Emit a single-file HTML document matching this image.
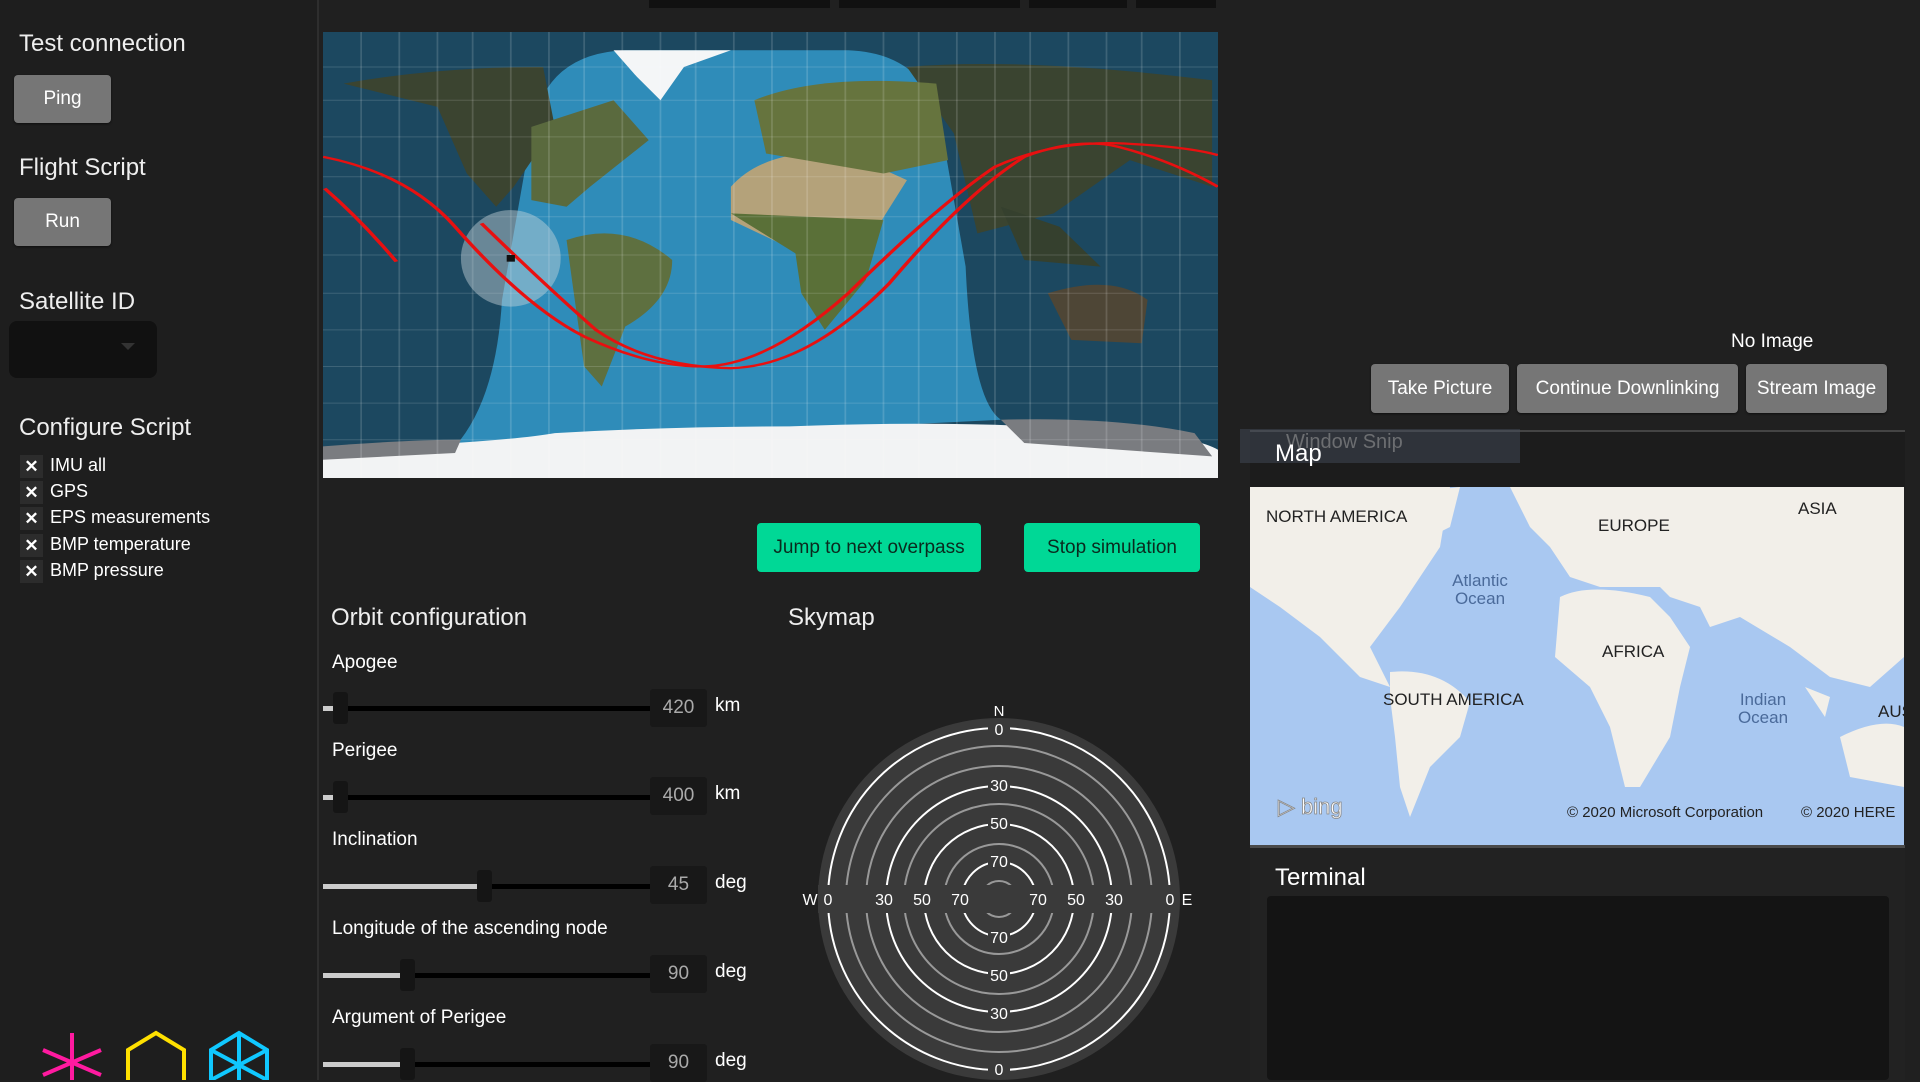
<!DOCTYPE html>
<html><head><meta charset="utf-8"><style>
*{margin:0;padding:0;box-sizing:border-box}
body{width:1920px;height:1080px;background:#202020;font-family:"Segoe UI","Liberation Sans",sans-serif;color:#fff;position:relative;overflow:hidden}
.a{position:absolute}
.h{font-size:24px;color:#eee;white-space:nowrap}
.btn{position:absolute;background:#767676;color:#fff;border-radius:4px;font-size:19px;display:flex;align-items:center;justify-content:center;box-shadow:0 1px 2px #0008}
.gbtn{position:absolute;background:#00d896;color:#0a2a1e;border-radius:4px;font-size:19px;display:flex;align-items:center;justify-content:center}
.cb{position:absolute;left:20px;width:23px;height:23px;background:#2c2c2c;color:#fff;font-size:17px;font-weight:bold;text-align:center;line-height:23px}
.cl{position:absolute;left:50px;font-size:18px;color:#fff}
.lbl{position:absolute;left:332px;font-size:19px;color:#fff}
.trk{position:absolute;left:323px;width:327px;height:5px;background:#000}
.fill{position:absolute;left:323px;height:5px;background:#ccc}
.th{position:absolute;width:15px;height:32px;background:#151515;border-radius:3px}
.vb{position:absolute;left:650px;width:57px;height:38px;background:#181818;border-radius:3px;color:#aaa;font-size:19px;display:flex;align-items:center;justify-content:center}
.un{position:absolute;left:715px;font-size:19px;color:#fff}
</style></head><body>
<!-- sidebar -->
<div class="a" style="left:0;top:0;width:319px;height:1080px;background:#1e1e1e;border-right:2px solid #2e2e2e"></div>
<div class="a h" style="left:19px;top:30px">Test connection</div>
<div class="btn" style="left:14px;top:75px;width:97px;height:48px">Ping</div>
<div class="a h" style="left:19px;top:154px">Flight Script</div>
<div class="btn" style="left:14px;top:198px;width:97px;height:48px">Run</div>
<div class="a h" style="left:19px;top:288px">Satellite ID</div>
<div class="a" style="left:9px;top:321px;width:148px;height:57px;background:#111;border-radius:8px"><div class="a" style="left:112px;top:22px;border:7px solid transparent;border-top-color:#333"></div></div>
<div class="a h" style="left:19px;top:414px">Configure Script</div>
<div class="cb" style="top:455px">✕</div><div class="cl" style="top:455px">IMU all</div>
<div class="cb" style="top:481px">✕</div><div class="cl" style="top:481px">GPS</div>
<div class="cb" style="top:507px">✕</div><div class="cl" style="top:507px">EPS measurements</div>
<div class="cb" style="top:534px">✕</div><div class="cl" style="top:534px">BMP temperature</div>
<div class="cb" style="top:560px">✕</div><div class="cl" style="top:560px">BMP pressure</div>
<svg class="a" style="left:0;top:1025px" width="320" height="55">
<g stroke="#ff1aa0" stroke-width="4" fill="none"><line x1="72" y1="8" x2="72" y2="60"/><line x1="43" y1="25" x2="101" y2="50"/><line x1="101" y1="25" x2="43" y2="50"/></g>
<path d="M128 60 V25 L156 8 L184 25 V60" stroke="#ffe000" stroke-width="4" fill="none"/>
<g stroke="#10c8ff" stroke-width="4" fill="none"><path d="M211 60 V25 L239 8 L267 25 V60"/><path d="M211 25 L267 55 M267 25 L211 55 M239 8 V60"/></g>
</svg>
<!-- top tabs -->
<div class="a" style="left:649px;top:0;width:181px;height:8px;background:#111"></div>
<div class="a" style="left:839px;top:0;width:181px;height:8px;background:#111"></div>
<div class="a" style="left:1029px;top:0;width:98px;height:8px;background:#111"></div>
<div class="a" style="left:1136px;top:0;width:80px;height:8px;background:#111"></div>
<!-- earth map -->
<svg class="a" style="left:323px;top:32px" width="895" height="446" viewBox="5 95 1525 1340" preserveAspectRatio="none">
<rect x="0" y="0" width="1600" height="1500" fill="#1c4860"/>
<path d="M360 400 Q380 160 520 150 L900 150 Q1040 160 1060 400 L1100 800 Q1110 1200 1160 1260 L230 1340 Q300 1200 310 900 Z" fill="#2f8cb9"/>
<path d="M40 250 Q200 200 380 200 L400 380 L330 560 L300 620 L250 520 L200 320 Z" fill="#3b4430"/>
<path d="M1000 200 Q1200 170 1520 240 L1520 560 L1380 480 L1250 640 L1120 700 L1080 400 Z" fill="#3a4430"/>
<path d="M1240 880 Q1350 820 1410 900 L1400 1030 L1280 1020 Z" fill="#4e4636"/>
<path d="M1160 620 L1260 680 L1330 800 L1200 780 Z" fill="#35402e"/>
<path d="M360 380 L500 300 L560 420 L460 560 L420 620 L360 600 Z" fill="#5a6a3e"/>
<path d="M420 720 Q520 660 600 780 Q600 900 520 980 L480 1160 L450 1100 L430 850 Z" fill="#5e7040"/>
<path d="M700 560 Q760 440 900 460 L1000 540 L950 680 L930 820 L860 980 L830 900 L820 760 L700 660 Z" fill="#b4a27a"/>
<path d="M700 640 L960 660 L930 840 L860 990 L820 880 L810 760 Z" fill="#5a7038"/>
<path d="M740 300 Q850 220 1050 250 L1070 480 L960 520 L760 460 Z" fill="#66743e"/>
<path d="M500 150 L700 150 L620 200 L580 300 L540 230 Z" fill="#f4f6f7"/>
<path d="M0 1390 L0 1350 Q300 1330 400 1300 Q600 1280 800 1280 Q1100 1260 1300 1290 Q1480 1300 1530 1350 L1530 1440 L0 1440 Z" fill="#f2f3f4"/>
<path d="M1160 1260 Q1350 1250 1490 1300 L1520 1370 L1200 1330 Z" fill="#7a7c80"/>
<path d="M5 1340 Q150 1320 240 1320 L230 1360 L5 1380 Z" fill="#7a7c80"/>
<g stroke="#ffffff" stroke-opacity="0.15" stroke-width="3">
<path d="M70 95V1435M135 95V1435M200 95V1435M260 95V1435M325 95V1435M390 95V1435M450 95V1435M515 95V1435M580 95V1435M640 95V1435M705 95V1435M770 95V1435M830 95V1435M895 95V1435M960 95V1435M1020 95V1435M1085 95V1435M1150 95V1435M1210 95V1435M1275 95V1435M1340 95V1435M1400 95V1435M1465 95V1435"/>
<path d="M5 200H1530M5 300H1530M5 410H1530M5 530H1530M5 650H1530M5 765H1530M5 880H1530M5 990H1530M5 1100H1530M5 1210H1530M5 1320H1530"/>
</g>
<ellipse cx="325" cy="775" rx="85" ry="145" fill="#c8d4dc" fill-opacity="0.45"/>
<g stroke="#e81010" stroke-width="7" fill="none">
<path d="M5 470 Q150 520 230 680 Q350 920 450 1010 Q560 1100 650 1100 Q760 1100 900 880 Q1050 620 1150 500 Q1250 420 1370 430 Q1480 440 1530 465"/>
<path d="M8 565 Q70 660 130 785"/>
<path d="M275 670 Q380 850 470 990 Q560 1100 700 1105 Q830 1100 970 850 Q1100 580 1200 470 Q1290 410 1360 440 Q1450 480 1530 560"/>
</g>
<rect x="318" y="765" width="14" height="20" fill="#111"/>
</svg>
<div class="gbtn" style="left:757px;top:523px;width:224px;height:49px">Jump to next overpass</div>
<div class="gbtn" style="left:1024px;top:523px;width:176px;height:49px">Stop simulation</div>
<div class="a h" style="left:331px;top:604px">Orbit configuration</div>
<div class="a h" style="left:788px;top:604px">Skymap</div>
<div class="lbl" style="top:652px">Apogee</div>
<div class="trk" style="top:706px"></div><div class="fill" style="top:706px;width:10px"></div><div class="th" style="left:333px;top:692px"></div>
<div class="vb" style="top:689px">420</div><div class="un" style="top:695px">km</div>
<div class="lbl" style="top:740px">Perigee</div>
<div class="trk" style="top:795px"></div><div class="fill" style="top:795px;width:10px"></div><div class="th" style="left:333px;top:781px"></div>
<div class="vb" style="top:777px">400</div><div class="un" style="top:783px">km</div>
<div class="lbl" style="top:829px">Inclination</div>
<div class="trk" style="top:884px"></div><div class="fill" style="top:884px;width:155px"></div><div class="th" style="left:477px;top:870px"></div>
<div class="vb" style="top:866px">45</div><div class="un" style="top:872px">deg</div>
<div class="lbl" style="top:918px">Longitude of the ascending node</div>
<div class="trk" style="top:973px"></div><div class="fill" style="top:973px;width:78px"></div><div class="th" style="left:400px;top:959px"></div>
<div class="vb" style="top:955px">90</div><div class="un" style="top:961px">deg</div>
<div class="lbl" style="top:1007px">Argument of Perigee</div>
<div class="trk" style="top:1062px"></div><div class="fill" style="top:1062px;width:78px"></div><div class="th" style="left:400px;top:1048px"></div>
<div class="vb" style="top:1044px">90</div><div class="un" style="top:1050px">deg</div>
<svg class="a" style="left:790px;top:690px" width="420" height="390" font-family="Liberation Sans,sans-serif" font-size="16" fill="#fff">
<circle cx="209" cy="209" r="181" fill="#3a3a3a"/>
<g fill="none" stroke="#999" stroke-width="2"><circle cx="209" cy="209" r="153"/><circle cx="209" cy="209" r="133"/><circle cx="209" cy="209" r="95"/><circle cx="209" cy="209" r="55"/><circle cx="209" cy="209" r="18"/></g>
<g fill="none" stroke="#fff" stroke-width="2"><circle cx="209" cy="209" r="171"/><circle cx="209" cy="209" r="113"/><circle cx="209" cy="209" r="75"/><circle cx="209" cy="209" r="37"/></g>
<g fill="#3a3a3a"><rect x="198" y="30" width="22" height="18"/><rect x="198" y="86" width="22" height="18"/><rect x="198" y="124" width="22" height="18"/><rect x="198" y="162" width="22" height="18"/><rect x="198" y="238" width="22" height="18"/><rect x="198" y="276" width="22" height="18"/><rect x="198" y="314" width="22" height="18"/><rect x="198" y="370" width="22" height="18"/><rect x="28" y="195" width="356" height="28"/></g>
<g text-anchor="middle" fill="#fff"><text x="209" y="45">0</text><text x="209" y="101">30</text><text x="209" y="139">50</text><text x="209" y="177">70</text><text x="209" y="253">70</text><text x="209" y="291">50</text><text x="209" y="329">30</text><text x="209" y="385">0</text>
<text x="209" y="26" font-size="15">N</text>
<text x="38" y="215">0</text><text x="94" y="215">30</text><text x="132" y="215">50</text><text x="170" y="215">70</text><text x="248" y="215">70</text><text x="286" y="215">50</text><text x="324" y="215">30</text><text x="380" y="215">0</text>
<text x="20" y="215">W</text><text x="397" y="215">E</text></g>
</svg>
<div class="a" style="left:1731px;top:331px;font-size:19px">No Image</div>
<div class="btn" style="left:1371px;top:364px;width:138px;height:49px">Take Picture</div>
<div class="btn" style="left:1517px;top:364px;width:221px;height:49px">Continue Downlinking</div>
<div class="btn" style="left:1746px;top:364px;width:141px;height:49px">Stream Image</div>
<div class="a" style="left:1250px;top:430px;width:655px;height:57px;background:#1c1c1c;border-top:2px solid #444"></div>
<div class="a" style="left:1240px;top:429px;width:280px;height:34px;background:rgba(70,80,95,0.45);color:rgba(150,150,150,0.6);font-size:20px;padding:2px 0 0 46px">Window Snip</div>
<div class="a" style="left:1275px;top:440px;font-size:24px">Map</div>
<svg class="a" style="left:1250px;top:487px" width="654" height="358" viewBox="0 0 654 358" font-family="Liberation Sans,sans-serif">
<rect width="654" height="358" fill="#a9c8f1"/>
<g fill="#f2efe9">
<path d="M0 0 H200 L190 60 L150 120 L120 160 L140 200 L110 190 L70 150 L30 120 L0 100 Z"/>
<path d="M120 10 L210 0 L200 40 L160 60 Z"/>
<path d="M140 185 Q190 180 220 215 L210 250 L180 280 L160 330 L150 300 L145 250 L140 210 Z"/>
<path d="M260 0 H654 V170 L620 200 L580 190 L540 160 L490 130 L460 140 L450 120 L420 110 L410 100 L350 100 L320 90 L300 60 L280 40 Z"/>
<path d="M310 110 Q340 95 400 110 L420 130 L440 160 L430 200 L420 250 L390 300 L375 300 L360 240 L340 200 L305 170 Z"/>
<path d="M590 250 Q630 230 654 240 V300 L600 290 Z"/>
<path d="M555 200 L580 210 L575 230 Z"/>
</g>
<g fill="#222" font-size="17">
<text x="16" y="35">NORTH AMERICA</text><text x="348" y="44">EUROPE</text><text x="548" y="27">ASIA</text>
<text x="352" y="170">AFRICA</text><text x="133" y="218">SOUTH AMERICA</text><text x="628" y="230">AUST</text></g>
<g fill="#4a6a9a" font-size="17" text-anchor="middle"><text x="230" y="99">Atlantic</text><text x="230" y="117">Ocean</text><text x="513" y="218">Indian</text><text x="513" y="236">Ocean</text></g>
<text x="28" y="327" fill="#fff" stroke="#888" stroke-width="0.8" font-size="22">▷ bing</text>
<text x="317" y="330" fill="#222" font-size="15">© 2020 Microsoft Corporation</text>
<text x="551" y="330" fill="#222" font-size="15">© 2020 HERE</text>
</svg>
<div class="a" style="left:1250px;top:845px;width:655px;height:3px;background:#4a4a4a"></div>
<div class="a" style="left:1250px;top:848px;width:655px;height:232px;background:#222"></div>
<div class="a" style="left:1275px;top:864px;font-size:24px">Terminal</div>
<div class="a" style="left:1267px;top:896px;width:622px;height:184px;background:#141414;border-radius:4px"></div>
</body></html>
